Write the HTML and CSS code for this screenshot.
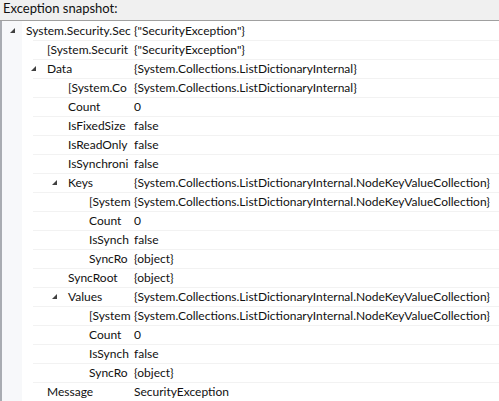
FILE: index.html
```html
<!DOCTYPE html>
<html>
<head>
<meta charset="utf-8">
<link rel="stylesheet" href="styles.css">
</head>
<body>
<div class="header">Exception snapshot:</div>
<div class="tree">
  <div class="row"><div class="name l0"><span class="exp"></span><span class="label">System.Security.Sec</span></div><div class="value">{"SecurityException"}</div></div>
  <div class="row"><div class="name l1"><span class="label">[System.Securit</span></div><div class="value">{"SecurityException"}</div></div>
  <div class="row"><div class="name l1"><span class="exp"></span><span class="label">Data</span></div><div class="value">{System.Collections.ListDictionaryInternal}</div></div>
  <div class="row"><div class="name l2"><span class="label">[System.Co</span></div><div class="value">{System.Collections.ListDictionaryInternal}</div></div>
  <div class="row"><div class="name l2"><span class="label">Count</span></div><div class="value">0</div></div>
  <div class="row"><div class="name l2"><span class="label">IsFixedSize</span></div><div class="value">false</div></div>
  <div class="row"><div class="name l2"><span class="label">IsReadOnly</span></div><div class="value">false</div></div>
  <div class="row"><div class="name l2"><span class="label">IsSynchroni</span></div><div class="value">false</div></div>
  <div class="row"><div class="name l2"><span class="exp"></span><span class="label">Keys</span></div><div class="value">{System.Collections.ListDictionaryInternal.NodeKeyValueCollection}</div></div>
  <div class="row"><div class="name l3"><span class="label">[System</span></div><div class="value">{System.Collections.ListDictionaryInternal.NodeKeyValueCollection}</div></div>
  <div class="row"><div class="name l3"><span class="label">Count</span></div><div class="value">0</div></div>
  <div class="row"><div class="name l3"><span class="label">IsSynch</span></div><div class="value">false</div></div>
  <div class="row"><div class="name l3"><span class="label">SyncRo</span></div><div class="value">{object}</div></div>
  <div class="row"><div class="name l2"><span class="label">SyncRoot</span></div><div class="value">{object}</div></div>
  <div class="row"><div class="name l2"><span class="exp"></span><span class="label">Values</span></div><div class="value">{System.Collections.ListDictionaryInternal.NodeKeyValueCollection}</div></div>
  <div class="row"><div class="name l3"><span class="label">[System</span></div><div class="value">{System.Collections.ListDictionaryInternal.NodeKeyValueCollection}</div></div>
  <div class="row"><div class="name l3"><span class="label">Count</span></div><div class="value">0</div></div>
  <div class="row"><div class="name l3"><span class="label">IsSynch</span></div><div class="value">false</div></div>
  <div class="row"><div class="name l3"><span class="label">SyncRo</span></div><div class="value">{object}</div></div>
  <div class="row"><div class="name l1"><span class="label">Message</span></div><div class="value">SecurityException</div></div>
</div>
</body>
</html>
```
FILE: styles.css
```css
html, body {
  margin: 0;
  padding: 0;
  background: #ffffff;
  overflow: hidden;
}
body {
  width: 499px;
  height: 401px;
  font-family: "Lato", "Noto Sans", sans-serif;
  font-size: 12px;
  color: #111111;
}
.header {
  height: 21px;
  box-sizing: border-box;
  line-height: 17px;
  padding-left: 3px;
  font-size: 13px;
  background: #f0f0f0;
  border-bottom: 1px solid #a0a0a0;
}
.tree {
  border-left: 2px solid #a9acb2;
  background: linear-gradient(to right, #f7f8fa 0, #f7f8fa 20px, #ffffff 20px);
  height: 380px;
  overflow: hidden;
}
.row {
  display: flex;
  height: 19px;
  line-height: 19px;
  white-space: nowrap;
  background: linear-gradient(to right, transparent 0, transparent 31px, #f2f2f2 31px) no-repeat;
  background-size: 100% 1px;
  background-position: 0 0;
}
.row:first-child {
  background: none;
}
.name {
  width: 129px;
  margin-right: 3px;
  flex: none;
  overflow: hidden;
  position: relative;
  box-sizing: border-box;
}
.l0 { padding-left: 24px; }
.l1 { padding-left: 45px; }
.l2 { padding-left: 66px; }
.l3 { padding-left: 87px; }
.exp {
  position: absolute;
  top: 7px;
  width: 0;
  height: 0;
  border-left: 5px solid transparent;
  border-bottom: 5px solid #404040;
}
.l0 .exp { left: 8px; }
.l1 .exp { left: 29px; }
.l2 .exp { left: 50px; }
.value {
  padding-left: 0;
}
```
